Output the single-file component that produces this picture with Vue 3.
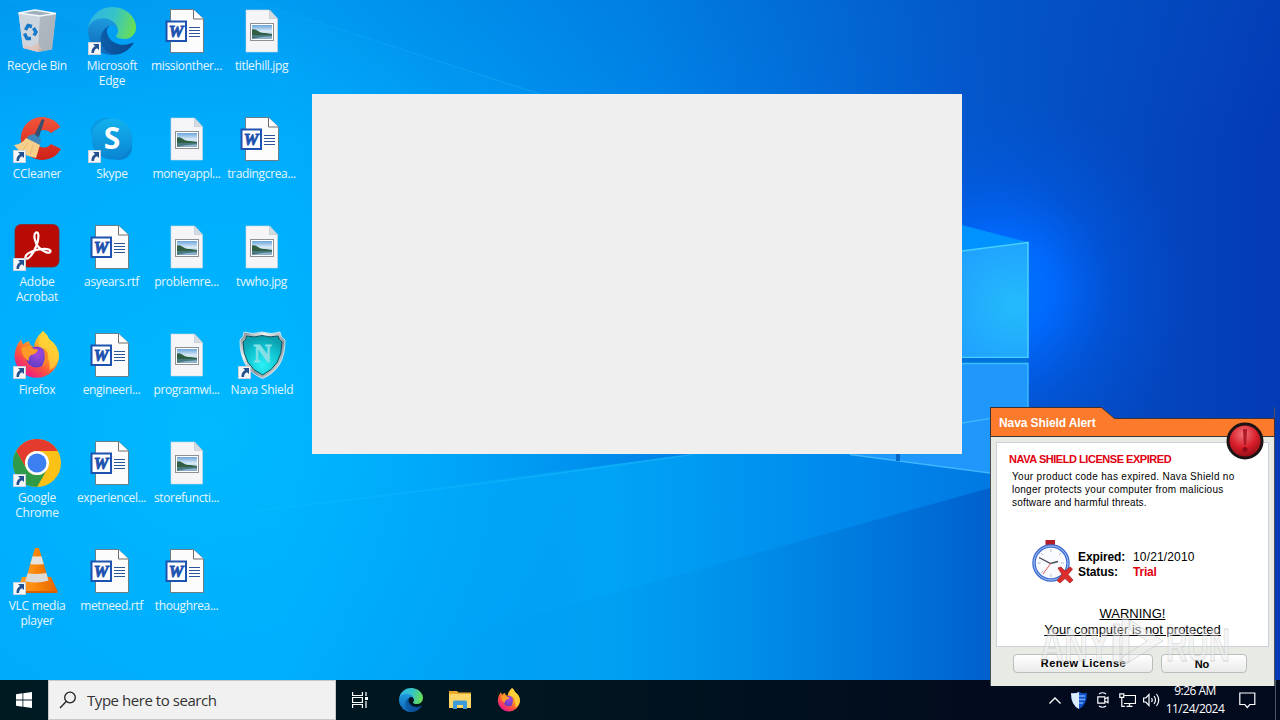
<template>
  <div class="screen">
    <svg class="sprite" width="0" height="0" aria-hidden="true">
      <defs>
        <linearGradient id="edgeBase" x1="0.1" y1="0.5" x2="1" y2="0.6">
          <stop offset="0" stop-color="#0c5ca8" />
          <stop offset="1" stop-color="#0b4a92" />
        </linearGradient>
        <linearGradient id="edgeMid" x1="0.5" y1="0" x2="0.4" y2="1">
          <stop offset="0" stop-color="#1e9de0" />
          <stop offset="1" stop-color="#0f66b8" />
        </linearGradient>
        <linearGradient id="edgeTop" x1="0" y1="0.4" x2="1" y2="0.6">
          <stop offset="0" stop-color="#2fb4e6" />
          <stop offset="0.5" stop-color="#36c4c8" />
          <stop offset="1" stop-color="#6be04f" />
        </linearGradient>
        <linearGradient id="binFace" x1="0" y1="0" x2="1" y2="1">
          <stop offset="0" stop-color="#d5dee6" />
          <stop offset="1" stop-color="#b3bbc4" />
        </linearGradient>
        <linearGradient id="skypeFill" x1="0" y1="0" x2="0" y2="1">
          <stop offset="0" stop-color="#12b2ee" />
          <stop offset="1" stop-color="#0a84d2" />
        </linearGradient>
        <linearGradient id="foxFlame" x1="0.85" y1="0.1" x2="0.25" y2="0.95">
          <stop offset="0" stop-color="#ffe53b" />
          <stop offset="0.35" stop-color="#ffa823" />
          <stop offset="0.65" stop-color="#ff5a36" />
          <stop offset="1" stop-color="#e8188c" />
        </linearGradient>
        <radialGradient id="foxGlobe" cx="0.55" cy="0.35" r="0.7">
          <stop offset="0" stop-color="#a548dc" />
          <stop offset="1" stop-color="#5b3bc4" />
        </radialGradient>
        <linearGradient id="photoSky" x1="0" y1="0" x2="0" y2="1">
          <stop offset="0" stop-color="#6aa5dc" />
          <stop offset="0.45" stop-color="#dbeaf5" />
          <stop offset="1" stop-color="#7fa9c4" />
        </linearGradient>
        <radialGradient id="shieldFill" cx="0.5" cy="0.75" r="0.7">
          <stop offset="0" stop-color="#2af1f5" />
          <stop offset="0.6" stop-color="#0fc6d2" />
          <stop offset="1" stop-color="#0ba0b0" />
        </radialGradient>
        <linearGradient id="shieldRim" x1="0" y1="0" x2="1" y2="1">
          <stop offset="0" stop-color="#6f7b82" />
          <stop offset="0.3" stop-color="#f2f4f5" />
          <stop offset="0.6" stop-color="#8a959c" />
          <stop offset="1" stop-color="#fff" />
        </linearGradient>
        <linearGradient id="coneFill" x1="0" y1="0" x2="1" y2="0">
          <stop offset="0" stop-color="#ffa12b" />
          <stop offset="0.5" stop-color="#fb8509" />
          <stop offset="1" stop-color="#e26600" />
        </linearGradient>
        <linearGradient id="cFill" x1="0" y1="0" x2="0" y2="1">
          <stop offset="0" stop-color="#f2553c" />
          <stop offset="1" stop-color="#cf2018" />
        </linearGradient>
        <clipPath id="coneClip"><path d="M22 1h4l10 34q-12 5-24 0z" /></clipPath>

        <symbol id="bin" viewBox="0 0 48 48">
          <path d="M5.500 6 22 3l21 3.500-4 36-14 2.500-15-4z" fill="url(#binFace)" />
          <path d="M5.500 6 27 9l-2 36-15-4z" fill="#cdd6de" />
          <path d="M27 9 43 6.500l-4 36L25 45z" fill="#a5adb7" opacity=".75" />
          <path d="M5.500 6 22 3l21 3.500L27 9z" fill="#9fb0bd" stroke="#f4f8fb" stroke-width="1.300" />
          <path d="m12 38 6 2 7-4 4 6-4 3-14-4z" fill="#e9b9a8" opacity=".6" />
          <g fill="none" stroke="#1878c8" stroke-width="3.400">
            <path d="m12.500 23 2.500-4.500 4 1" />
            <path d="m20.500 21 2.500 4-2 3.500" />
            <path d="M18 31.500h-4l-2.500-5" />
          </g>
        </symbol>

        <symbol id="edge" viewBox="0 0 256 256">
          <path fill="url(#edgeBase)" d="M235.680 190.490c-3.400 1.780-6.930 3.350-10.500 4.720a101.800 101.800 0 0 1-35.900 6.460c-47.320 0-88.540-32.550-88.540-74.320a31.480 31.480 0 0 1 16.430-27.310c-42.800 1.800-53.800 46.400-53.800 72.530 0 73.880 68.090 81.370 82.760 81.370 7.910 0 19.840-2.300 27-4.560l1.310-.440a128.340 128.340 0 0 0 66.600-52.800 4 4 0 0 0-5.360-5.650z" />
          <path fill="url(#edgeMid)" d="M105.730 241.420a79.200 79.200 0 0 1-22.740-21.340 80.720 80.720 0 0 1 29.530-120c3.120-1.470 8.450-4.130 15.540-4a32.350 32.350 0 0 1 25.690 13 31.880 31.880 0 0 1 6.360 18.660c0-.210 24.460-79.600-80-79.600-43.900 0-80 41.660-80 78.210a130.150 130.150 0 0 0 12.110 56 128 128 0 0 0 156.380 67.110 75.550 75.550 0 0 1-62.780-8z" />
          <path fill="url(#edgeTop)" d="M152.330 148.860c-.810 1.050-3.300 2.500-3.300 5.660 0 2.610 1.700 5.120 4.720 7.230 14.380 10 41.490 8.680 41.560 8.680a59.560 59.560 0 0 0 30.270-8.350A61.380 61.380 0 0 0 256 109.190c.260-22.410-8-37.310-11.340-43.910C223.460 23.840 177.720 0 128 0A128 128 0 0 0 0 126.200c.480-36.540 36.800-66.050 80-66.050 3.500 0 23.460.340 42 10.070 16.340 8.580 24.900 18.940 30.850 29.210 6.180 10.670 7.280 24.150 7.280 29.520 0 5.370-2.740 13.330-7.800 19.910z" />
        </symbol>

        <symbol id="word" viewBox="0 0 48 48">
          <path d="M7.500 2.500h23l10 9.500v33.500h-33z" fill="#fcfcfc" stroke="#6c7d88" />
          <path d="M30.500 2.500V12h10" fill="#fff" stroke="#6c6c6c" />
          <path d="M26 20.500h11M26 23.500h11M26 26.500h11M26 29.500h11" stroke="#2b579a" stroke-width="1.200" />
          <rect x="3.500" y="14.500" width="19.500" height="19.500" fill="#fff" stroke="#1d52b0" stroke-width="2" />
          <text x="13" y="30" text-anchor="middle" font-family="Liberation Serif, serif" font-weight="bold" font-style="italic" font-size="16.500" fill="#1d52b0" stroke="#1d52b0" stroke-width=".9">W</text>
        </symbol>

        <symbol id="photo" viewBox="0 0 48 48">
          <path d="M8 3h23.500l8 8.500V45H8z" fill="#f5f5f7" stroke="#d0d6dc" stroke-width=".6" />
          <path d="M31.500 3v8.500h8z" fill="#d2dbe2" stroke="#b8c2ca" stroke-width=".6" />
          <rect x="12.500" y="16.500" width="23" height="17" fill="#fff" stroke="#8b8f96" />
          <rect x="14" y="18" width="20" height="14" fill="url(#photoSky)" />
          <path d="M14 22.500q3-1 6 1.500t7 2l7 1v1H14z" fill="#2f5f42" />
          <path d="M14 28h20v1.500q-10-.5-20 2.500z" fill="#4b7780" />
        </symbol>

        <symbol id="ccleaner" viewBox="0 0 48 48">
          <path d="M47.500 12A21.500 21.500 0 1 0 48 34L38 29q-3 3.500-7 3.500-8 0-8-9 0-8.500 8-8.500 4 0 7 3z" fill="url(#cFill)" />
          <path d="M28.500 5q1.500-1.500 3 0L25 25l-5-2z" fill="#35516f" />
          <path d="m15 21 6-2 7 5-1 6-4 1-10-4z" fill="#3f86bb" />
          <path d="m13 23 14 7-4 13q-14-2-22-13 8-1 12-7z" fill="#f6cf8b" />
          <path d="m15 28-6 8M20 30l-3 10" stroke="#e8bb77" />
        </symbol>

        <symbol id="skype" viewBox="0 0 48 48">
          <circle cx="17" cy="17" r="14" fill="#0a9ce4" />
          <circle cx="31" cy="32" r="13" fill="#0a82cf" />
          <circle cx="24" cy="24" r="20.500" fill="url(#skypeFill)" />
          <text x="24" y="34" text-anchor="middle" font-family="Open Sans, sans-serif" font-weight="bold" font-size="30" fill="#fff">S</text>
        </symbol>

        <symbol id="acrobat" viewBox="0 0 48 48">
          <rect x="2" y="1.500" width="44" height="42.500" rx="6" fill="#b90b06" stroke="#8d2320" stroke-width=".8" />
          <path d="M12.500 35c-1-3 5-7 13-8.500 7-1.300 12-.500 12 1.800 0 3-7 1.200-12-4.300-4-4.500-5.500-13-2.500-14.500 3-1.200 3.300 5.500.5 13-3 8-8.500 15.500-11 12.500z" fill="none" stroke="#fff" stroke-width="2.200" />
        </symbol>

        <symbol id="firefox" viewBox="0 0 48 48">
          <path d="M30 0q4 3 6 8 10 7 10 18A22.300 22.300 0 0 1 1.500 26Q2 15 8 8.500l2 5q3-3 6-3.500 0 4 5 6 1-9 9-16z" fill="url(#foxFlame)" />
          <path d="M30 0q4 3 6 8 10 7 10 18-2 10-9.500 13 1-8-3-15-6-7-8-10 0-7 4.500-14z" fill="#ffd43a" opacity=".75" />
          <circle cx="23.500" cy="26" r="10.500" fill="url(#foxGlobe)" />
          <path d="M8 17q8-4 13 1 4 0 4 1.500-3 4-7 4.500-3 2-2 6-7-3-8-13z" fill="#ff9a28" />
          <path d="M30 17q6 3 5 10-1 6-6 8 5-8 1-18z" fill="#ff8a24" />
        </symbol>

        <symbol id="chrome" viewBox="0 0 48 48">
          <circle cx="24" cy="24" r="24" fill="#fbc116" />
          <path d="M3.200 12A24 24 0 0 1 44.800 12H24a12 12 0 0 0-10.400 18z" fill="#e33b2e" />
          <path d="M3.200 12A24 24 0 0 0 24 48l10.400-18a12 12 0 0 1-20.800 0z" fill="#2f9a47" />
          <circle cx="24" cy="24" r="12" fill="#fff" />
          <circle cx="24" cy="24" r="9.500" fill="#3b7ff0" />
        </symbol>

        <symbol id="vlc" viewBox="0 0 48 48">
          <path d="M9 30 4.500 44q-.5 2 2 2h36q2.500 0 2-2L38 30z" fill="url(#coneFill)" />
          <path d="M4.500 44q-.5 2 2 2h36q2.500 0 2-2z" fill="#d85f00" />
          <g clip-path="url(#coneClip)">
            <path d="M10 0h28v40H10z" fill="url(#coneFill)" />
            <path d="M10 8q14 3 28 0v8q-14 3-28 0z" fill="#e5e3df" />
            <path d="M8 25q16 4 30 0v8q-15 5-30 0z" fill="#dcdad6" />
          </g>
        </symbol>

        <symbol id="nava" viewBox="0 0 48 48">
          <path d="M6 1q9 3 18 0 10 3 18 0 0 5 5 8 .5 29-22.500 38.500Q1.500 38 2 9q4-3 4-8z" fill="url(#shieldRim)" stroke="#e9edef" stroke-width=".8" />
          <path d="M8.500 5q8 2 15.500-.5Q32 7 40 5q1 4 4 6 0 24-19.500 33Q5 35 5 11q3.500-2 3.500-6z" fill="url(#shieldFill)" stroke="#12545f" />
          <text x="24.500" y="30.500" text-anchor="middle" font-family="Liberation Serif, serif" font-weight="bold" font-size="25" fill="#84dfe6" stroke="#84dfe6" stroke-width=".8">N</text>
        </symbol>

        <symbol id="shortcut" viewBox="0 0 13 13">
          <rect x=".5" y=".5" width="12" height="12" fill="#f5f8fb" stroke="#c8d2da" />
          <path d="M5 2h6v6L9 6.200Q6 7.500 6 11H3.500Q3 6.500 7 4z" fill="#24508f" />
        </symbol>
      </defs>
    </svg>

    <svg class="wallpaper" viewBox="0 0 1280 720" preserveAspectRatio="none">
      <defs>
        <linearGradient id="sky" gradientUnits="userSpaceOnUse" x1="0" y1="0" x2="1280" y2="0">
          <stop offset="0" stop-color="#00a8fb" />
          <stop offset="0.22" stop-color="#00aafc" />
          <stop offset="0.5" stop-color="#0087ea" />
          <stop offset="0.75" stop-color="#0458cc" />
          <stop offset="1" stop-color="#043ab6" />
        </linearGradient>
        <radialGradient id="leftGlow" gradientUnits="userSpaceOnUse" cx="210" cy="430" r="420">
          <stop offset="0" stop-color="#00b9ff" />
          <stop offset="1" stop-color="#00b4ff" stop-opacity="0" />
        </radialGradient>
        <linearGradient id="topShade" x1="0" y1="0" x2="0" y2="1">
          <stop offset="0" stop-color="#0058c0" stop-opacity=".18" />
          <stop offset="0.2" stop-color="#0058c0" stop-opacity="0" />
        </linearGradient>
        <radialGradient id="paneGlow" gradientUnits="userSpaceOnUse" cx="1000" cy="290" r="190">
          <stop offset="0" stop-color="#0078ff" />
          <stop offset="0.28" stop-color="#006aff" stop-opacity=".95" />
          <stop offset="0.6" stop-color="#005ef0" stop-opacity=".35" />
          <stop offset="1" stop-color="#0058e0" stop-opacity="0" />
        </radialGradient>
        <radialGradient id="paneFill" gradientUnits="userSpaceOnUse" cx="1015" cy="305" r="70">
          <stop offset="0" stop-color="#24bbfb" />
          <stop offset="1" stop-color="#20a2ff" />
        </radialGradient>
        <linearGradient id="floor" gradientUnits="userSpaceOnUse" x1="400" y1="0" x2="1000" y2="0">
          <stop offset="0" stop-color="#00a4f2" stop-opacity="0" />
          <stop offset="0.5" stop-color="#0092e8" stop-opacity=".5" />
          <stop offset="0.8" stop-color="#0074da" stop-opacity=".9" />
          <stop offset="1" stop-color="#005ecc" />
        </linearGradient>
        <linearGradient id="middle" gradientUnits="userSpaceOnUse" x1="350" y1="0" x2="1000" y2="0">
          <stop offset="0" stop-color="#00b0fc" stop-opacity="0" />
          <stop offset="0.4" stop-color="#00a4f6" />
          <stop offset="0.75" stop-color="#008aec" />
          <stop offset="1" stop-color="#0078e2" />
        </linearGradient>
        <linearGradient id="beam" gradientUnits="userSpaceOnUse" x1="250" y1="0" x2="640" y2="0">
          <stop offset="0" stop-color="#2cc4ff" stop-opacity=".1" />
          <stop offset="1" stop-color="#2cc4ff" stop-opacity=".4" />
        </linearGradient>
      </defs>
      <rect width="1280" height="720" fill="url(#sky)" />
      <rect width="1280" height="720" fill="url(#topShade)" />
      <rect width="1280" height="720" fill="url(#leftGlow)" />
      <path d="M250 0 540 94H312L0 0z" fill="#0cb0ff" opacity=".12" />
      <path d="M250 0 540 94" stroke="url(#beam)" />
      <path d="M240 512 694 454H990V720H240z" fill="url(#middle)" />
      <path d="M250 511Q500 483 694 454" fill="none" stroke="url(#beam)" stroke-width="1.500" />
      <path d="M400 650 603 596 990 488v232H400z" fill="url(#floor)" />
      <rect x="800" y="100" width="400" height="400" fill="url(#paneGlow)" clip-path="inset(0 0 46px 0)" />
      <path d="M962 225 1027 242 962 251z" fill="#0092ff" />
      <path d="M962 251 1028 242.500V357.500H962z" fill="url(#paneFill)" />
      <path d="M962 251 1028 242.500V357.500H962" fill="none" stroke="#48d0fa" stroke-width="1.600" />
      <path d="M962 358h66v5h-66z" fill="#0072dd" />
      <path d="M846 454 962 363h66v115L990 473z" fill="#1f97fb" />
      <path d="M962 363.500h66V420" fill="none" stroke="#3cbfff" stroke-width="1.400" />
      <path d="m962 423 28-4.500M850 454.500 990 473" stroke="#3fb5ff" stroke-width="1.300" />
      <path d="M898 454v7" stroke="#0467c6" stroke-width="4" />
    </svg>

    <div class="desktop">
      <div v-for="item in items" :key="item.label" class="item">
        <div class="item-icon">
          <svg width="48" height="48"><use :href="'#' + item.icon" /></svg>
          <svg v-if="item.shortcut" class="arrow" width="13" height="13"><use href="#shortcut" /></svg>
        </div>
        <span :class="['item-label', { file: item.label.includes('.') }]">{{ item.label }}</span>
      </div>
    </div>

    <div class="blank-window"></div>

    <footer class="taskbar">
      <div class="start">
        <svg width="16" height="16" viewBox="0 0 16 16" fill="#fff">
          <path d="M0 2.200 6.500 1.300v6.200H0zM7.300 1.200 16 0v7.500H7.300zM0 8.400h6.500v6.300L0 13.800zM7.300 8.400H16V16l-8.700-1.200z" />
        </svg>
      </div>
      <div class="search">
        <svg width="18" height="18" viewBox="0 0 18 18" fill="none" stroke="#222" stroke-width="1.300">
          <circle cx="11" cy="6.500" r="5.300" />
          <path d="M7.200 10.500 1 17" />
        </svg>
        <span>Type here to search</span>
      </div>
      <div class="pinned">
        <svg width="16" height="16" viewBox="0 0 16 16" fill="none" stroke="#fff" stroke-width="1.200">
          <path d="M.6 0v3.500h9.800V0M.6 16v-3.500h9.800V16M.6 5.500h9.800v5H.6zM14 0v4M14 9v7" />
          <path d="M13 5h3v3h-3z" fill="#fff" stroke="none" />
        </svg>
        <svg width="24" height="24"><use href="#edge" /></svg>
        <svg width="22" height="20" viewBox="0 0 22 20">
          <path d="M0 1h8l1.500 1.500H22V18H0z" fill="#e9a92c" />
          <path d="M0 4h22v14H0z" fill="#fcd667" />
          <path d="M4 19v-7q0-1.500 1.500-1.500h11Q18 10.500 18 12v7h-4v-4H8v4z" fill="#3f9bd8" />
        </svg>
        <svg width="24" height="24"><use href="#firefox" /></svg>
      </div>
      <div class="tray">
        <svg width="12" height="7" viewBox="0 0 12 7" fill="none" stroke="#fff" stroke-width="1.300"><path d="m.5 6.500 5.500-5.500 5.500 5.500" /></svg>
        <svg width="16" height="17" viewBox="0 0 16 17">
          <path d="M0 1q4 1 8-1 4 2 8 1 0 12-8 16Q0 13 0 1z" fill="#1252cc" />
          <path d="M0 1q4 1 8-1v17Q0 13 0 1z" fill="#dcecff" />
          <path d="M8 4h6M8 7.500h6M8 11h4" stroke="#6fa8f5" stroke-width="1.300" />
        </svg>
        <svg width="12" height="16" viewBox="0 0 12 16" fill="none" stroke="#fff" stroke-width="1.200">
          <path d="M2 2Q5.500-.5 9 2M2 14q3.500 2.500 7 0M.8 4.800h7v6.400h-7zM7.800 7 11 5.300v5.400L7.800 9" />
        </svg>
        <svg width="17" height="14" viewBox="0 0 17 14" fill="none" stroke="#fff" stroke-width="1.200">
          <path d="M5.500 2.500h11v8H5M10.500 10.500v3M7.500 13.400h6M.8.800h4v3.500h-4zM2.800 4.300v9h3" />
        </svg>
        <svg width="17" height="14" viewBox="0 0 17 14" fill="none" stroke="#fff" stroke-width="1.200">
          <path d="M.6 5h2.200L6 1.500v11L2.800 9H.6zM8.500 5q1.500 2 0 4M11 3q3 4 0 8M13.500 1q4.500 6 0 12" />
        </svg>
      </div>
      <div class="clock">
        <span class="time">9:26 AM</span>
        <span class="date">11/24/2024</span>
      </div>
      <svg class="notify" width="17" height="17" viewBox="0 0 17 17" fill="none" stroke="#fff" stroke-width="1.200"><path d="M.8 1h15v11.500h-5l-2.500 3-2.500-3h-5z" /></svg>
      <div class="peek"></div>
    </footer>

    <section class="alert">
      <svg class="alert-tab" width="285" height="30" viewBox="0 0 285 30">
        <path d="M.5.500h111l13 11H284.500v18H.5z" fill="#fb7a2b" stroke="#3b332f" />
      </svg>
      <svg class="alert-ball" width="38" height="38" viewBox="0 0 38 38">
        <defs>
          <radialGradient id="ball" cx="0.45" cy="0.3" r="0.7">
            <stop offset="0" stop-color="#f0747a" />
            <stop offset="0.55" stop-color="#d81f2c" />
            <stop offset="1" stop-color="#8f0d16" />
          </radialGradient>
        </defs>
        <circle cx="19" cy="19" r="17" fill="url(#ball)" stroke="#1c1414" stroke-width="3" />
        <path d="M17 7h4l-.8 16h-2.400z" fill="#b01a28" />
        <circle cx="19" cy="27.500" r="2.500" fill="#8f0d18" />
      </svg>
      <h1>Nava Shield Alert</h1>
      <div class="alert-body">
        <h2>NAVA SHIELD LICENSE EXPIRED</h2>
        <p class="message">
          <span class="line-a">Your product code has expired. Nava Shield no</span><br>
          <span class="line-b">longer protects your computer from malicious</span><br>
          <span class="line-c">software and harmful threats.</span>
        </p>
        <div class="status">
          <svg width="42" height="44" viewBox="0 0 42 44">
            <rect x="14.500" y="0" width="9.500" height="6" fill="#b51f2b" />
            <circle cx="20" cy="23" r="17" fill="#f8fafe" stroke="#3d6bd0" stroke-width="3.500" />
            <circle cx="20" cy="23" r="17" fill="none" stroke="#a8c8f6" />
            <path d="M20 9v3M20 34v3M6.500 23h3M30 23h3M10 13l2 2M30 13l-2 2M10 33l2-2" stroke="#b4bfce" />
            <path d="M8 17.500 19.500 23.500 27 21.500" fill="none" stroke="#444b58" stroke-width="1.400" />
            <path d="m20 23-8 11" stroke="#df5a5a" />
            <path d="m27 28 3-1 4 4 5-4 2.500 2-4.500 5.500 5 5.500-3 3-5-4.500-5 4.500-3-2.500 5-6z" fill="#dc2c2c" stroke="#a8282a" stroke-width=".8" />
          </svg>
          <dl>
            <dt>Expired:</dt><dd>10/21/2010</dd>
            <dt>Status:</dt><dd class="trial">Trial</dd>
          </dl>
        </div>
        <div class="warning">
          <span class="warn-a">WARNING!</span>
          <span class="warn-b">Your computer is not protected</span>
        </div>
      </div>
      <div class="actions">
        <button class="renew">Renew License</button>
        <button class="no">No</button>
      </div>
      <svg class="watermark" width="200" height="60" viewBox="0 0 200 60">
        <g font-family="Liberation Sans, sans-serif" font-weight="bold" font-size="46" fill="#ebebeb" fill-opacity=".45" stroke="#b0b4b0" stroke-opacity=".45" stroke-width=".9">
          <text x="2" y="49" textLength="70" lengthAdjust="spacingAndGlyphs">ANY</text>
          <text x="128" y="49" textLength="64" lengthAdjust="spacingAndGlyphs">RUN</text>
          <path d="M75 12h7v38h-7zM84 4l7 4v42h-7zM92 8l33 21-42 26v-9l26-17-17-11z" />
        </g>
      </svg>
    </section>
  </div>
</template>

<script setup>
const items = [
  { label: 'Recycle Bin', icon: 'bin' },
  { label: 'CCleaner', icon: 'ccleaner', shortcut: true },
  { label: 'Adobe Acrobat', icon: 'acrobat', shortcut: true },
  { label: 'Firefox', icon: 'firefox', shortcut: true },
  { label: 'Google Chrome', icon: 'chrome', shortcut: true },
  { label: 'VLC media player', icon: 'vlc', shortcut: true },
  { label: 'Microsoft Edge', icon: 'edge', shortcut: true },
  { label: 'Skype', icon: 'skype', shortcut: true },
  { label: 'asyears.rtf', icon: 'word' },
  { label: 'engineeri...', icon: 'word' },
  { label: 'experiencel...', icon: 'word' },
  { label: 'metneed.rtf', icon: 'word' },
  { label: 'missionther...', icon: 'word' },
  { label: 'moneyappl...', icon: 'photo' },
  { label: 'problemre...', icon: 'photo' },
  { label: 'programwi...', icon: 'photo' },
  { label: 'storefuncti...', icon: 'photo' },
  { label: 'thoughrea...', icon: 'word' },
  { label: 'titlehill.jpg', icon: 'photo' },
  { label: 'tradingcrea...', icon: 'word' },
  { label: 'tvwho.jpg', icon: 'photo' },
  { label: 'Nava Shield', icon: 'nava', shortcut: true }
]
</script>

<style>
body {
  margin: 0;
  overflow: hidden;
}
</style>

<style scoped>
.screen {
  position: relative;
  width: 1280px;
  height: 720px;
  overflow: hidden;
  display: flex;
  flex-direction: column;
  font-family: "Open Sans", "Noto Sans", sans-serif;
}

.sprite {
  position: absolute;
}

.wallpaper {
  position: absolute;
  inset: 0;
  width: 1280px;
  height: 720px;
}

.desktop {
  position: relative;
  flex: 1;
  display: grid;
  grid-template-rows: repeat(6, 108px);
  grid-auto-columns: 75px;
  grid-auto-flow: column;
  margin-left: -0.5px;
  padding-top: 7px;
}

.item {
  display: flex;
  flex-direction: column;
  align-items: center;
}

.item-icon {
  position: relative;
  width: 48px;
  height: 48px;
}

.item-icon svg {
  display: block;
}

.item-icon .arrow {
  position: absolute;
  left: 0;
  bottom: 0;
}

.item-label {
  margin-top: 3px;
  width: 74px;
  font-size: 12px;
  line-height: 15px;
  letter-spacing: -0.25px;
  text-align: center;
  color: #e6f6ff;
}

.item-label.file {
  margin-right: 1px;
  letter-spacing: -0.36px;
}

.blank-window {
  position: absolute;
  left: 312px;
  top: 94px;
  width: 650px;
  height: 360px;
  background: #efefef;
}

.taskbar {
  position: relative;
  height: 40px;
  display: flex;
  align-items: center;
  background: linear-gradient(90deg, #001a22, #001620 40%, #020c1e 75%, #020a1e);
  color: #fff;
}

.start {
  width: 48px;
  display: flex;
  justify-content: center;
}

.search {
  box-sizing: border-box;
  width: 288px;
  height: 40px;
  display: flex;
  align-items: center;
  gap: 10px;
  padding-left: 10px;
  background: #f1f1f1;
  border: 1px solid #c4c8ca;
  font-size: 15px;
  letter-spacing: -0.45px;
  color: #333;
}

.pinned {
  display: flex;
  align-items: center;
  padding-left: 16px;
}

.pinned svg:nth-child(2) {
  margin-left: 31px;
}

.pinned svg:nth-child(3) {
  margin-left: 26px;
}

.pinned svg:nth-child(4) {
  margin-left: 26px;
}

.tray {
  margin-left: auto;
  display: flex;
  align-items: center;
  gap: 10px;
}

.tray svg:nth-child(4) {
  margin-right: -3px;
}

.clock {
  width: 70px;
  display: flex;
  flex-direction: column;
  align-items: center;
  font-size: 12px;
  line-height: 18px;
  letter-spacing: -0.5px;
}

.notify {
  margin-left: 9px;
}

.peek {
  width: 4px;
  height: 40px;
  margin-left: 19px;
  border-left: 1px solid #4c5563;
}

.alert {
  position: absolute;
  left: 990px;
  top: 407px;
  box-sizing: border-box;
  width: 285px;
  height: 279px;
  padding: 0 6px;
  font-family: "Liberation Sans", Arial, sans-serif;
  color: #000;
  background: linear-gradient(transparent 29px, #e7ebe4 29px);
  border-left: 1px solid #46505a;
  border-right: 1px solid #46505a;
}

.alert-tab {
  position: absolute;
  left: -1px;
  top: 0;
}

.alert-ball {
  position: absolute;
  z-index: 1;
  left: 235px;
  top: 15px;
}

h1 {
  position: relative;
  height: 35px;
  margin: 0;
  padding-left: 2px;
  font-size: 12px;
  line-height: 32px;
  letter-spacing: -0.1px;
  color: #fff;
}

.alert-body {
  box-sizing: border-box;
  width: 273px;
  height: 205px;
  margin-left: -1px;
  padding: 9px 0 0 12px;
  background: #fff;
  border: 1px solid #ccd0dc;
}

h2 {
  margin: 0;
  font-size: 11px;
  line-height: 14px;
  letter-spacing: -0.46px;
  color: #e1000f;
}

.message {
  margin: 4px 0 0 3px;
  font-size: 10px;
  line-height: 13px;
  white-space: nowrap;
}

.line-a {
  letter-spacing: 0.31px;
}

.line-b {
  letter-spacing: 0.26px;
}

.line-c {
  letter-spacing: 0.18px;
}

.status {
  display: flex;
  gap: 5px;
  margin: 31px 0 0 22px;
}

dl {
  display: grid;
  grid-template-columns: 55px auto;
  grid-auto-rows: 15px;
  height: 30px;
  margin: 10px 0 0;
  font-size: 12px;
  line-height: 15px;
}

dt {
  font-weight: bold;
  letter-spacing: -0.1px;
}

dd {
  margin: 0;
  letter-spacing: 0.15px;
}

.trial {
  font-weight: bold;
  letter-spacing: -0.2px;
  color: #e1000f;
}

.warning {
  display: flex;
  flex-direction: column;
  align-items: center;
  margin: 22px 12px 0 0;
  font-size: 13px;
  line-height: 16px;
  text-decoration: underline;
}

.actions {
  display: flex;
  gap: 8px;
  padding: 7px 0 0 16px;
}

button {
  height: 19px;
  padding: 0;
  font-family: "Liberation Sans", Arial, sans-serif;
  font-size: 11px;
  font-weight: bold;
  color: #000;
  background: linear-gradient(#fff, #e9ebe9);
  border: 1px solid #b9bdbd;
  border-radius: 4px;
}

.renew {
  width: 140px;
  padding: 0 0 2px 1px;
  letter-spacing: 0.45px;
}

.no {
  width: 86px;
  padding-right: 4px;
}

.watermark {
  position: absolute;
  left: 47px;
  top: 205px;
  overflow: visible;
}
</style>
